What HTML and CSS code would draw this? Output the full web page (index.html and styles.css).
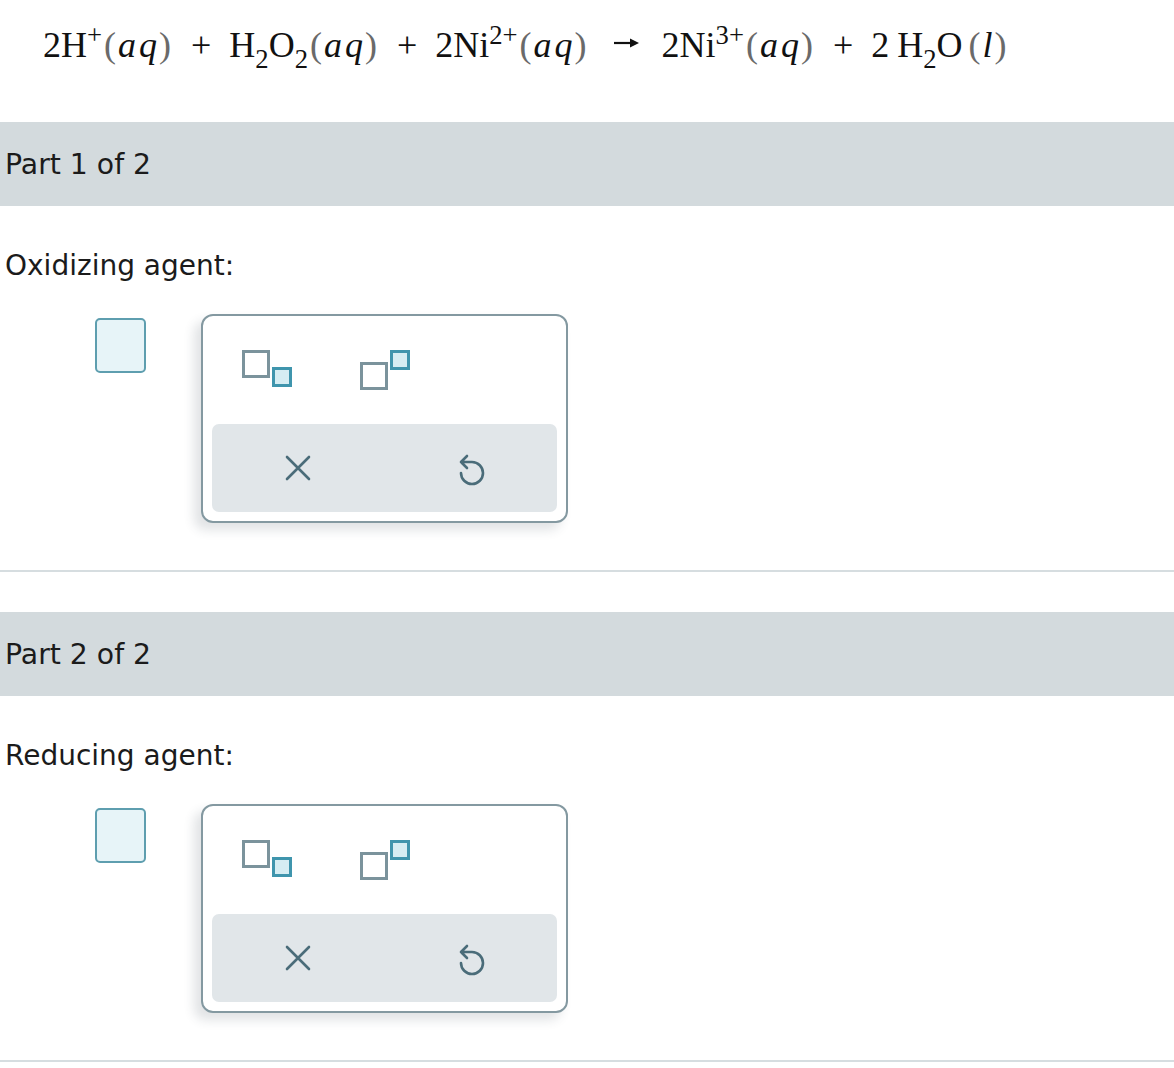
FILE: index.html
```html
<!DOCTYPE html>
<html lang="en">
<head>
<meta charset="utf-8">
<title>Redox agents</title>
<link rel="stylesheet" href="styles.css">
</head>
<body>
<div class="equation">
  <span>2H</span><sup>+</sup><span class="paren">(</span><i>a</i><i class="q">q</i><span class="paren">)</span>
  <span class="op">+</span>
  <span>H</span><sub>2</sub><span>O</span><sub>2</sub><span class="paren">(</span><i>a</i><i class="q">q</i><span class="paren">)</span>
  <span class="op">+</span>
  <span>2Ni</span><sup>2+</sup><span class="paren">(</span><i>a</i><i class="q">q</i><span class="paren">)</span>
  <svg class="arrow" width="26" height="12" viewBox="0 0 26 12"><path d="M0 6 H18" class="arrow-line"/><path d="M16 1.5 L25 6 L16 10.5 Z" class="arrow-head"/></svg>
  <span>2Ni</span><sup>3+</sup><span class="paren">(</span><i>a</i><i class="q">q</i><span class="paren">)</span>
  <span class="op">+</span>
  <span class="coef">2</span><span>H</span><sub>2</sub><span>O</span><span class="paren gapl">(</span><i>l</i><span class="paren">)</span>
</div>

<section class="part">
  <div class="part-header">Part 1 of 2</div>
  <p class="prompt">Oxidizing agent:</p>
  <div class="answer-row">
    <div class="answer-box"></div>
    <div class="palette">
      <div class="palette-icons">
        <svg class="tpl" width="50" height="40" viewBox="0 0 50 40"><rect x="1.5" y="1.5" width="25" height="25" class="big"/><rect x="31.5" y="18.5" width="17" height="17" class="small"/></svg>
        <svg class="tpl" width="50" height="40" viewBox="0 0 50 40"><rect x="1.5" y="13.5" width="25" height="25" class="big"/><rect x="31.5" y="1.5" width="17" height="17" class="small"/></svg>
      </div>
      <div class="palette-actions">
        <div class="action"><svg width="26" height="26" viewBox="0 0 26 26"><path d="M2 2 L24 24 M24 2 L2 24" class="stroke"/></svg></div>
        <div class="action"><svg width="40" height="45" viewBox="0 0 40 45"><path d="M16 10 L10 16 L16 22 M10 16 H21 A11 11 0 1 1 10 27" class="stroke"/></svg></div>
      </div>
    </div>
  </div>
  <hr class="divider">
</section>

<section class="part">
  <div class="part-header">Part 2 of 2</div>
  <p class="prompt">Reducing agent:</p>
  <div class="answer-row">
    <div class="answer-box"></div>
    <div class="palette">
      <div class="palette-icons">
        <svg class="tpl" width="50" height="40" viewBox="0 0 50 40"><rect x="1.5" y="1.5" width="25" height="25" class="big"/><rect x="31.5" y="18.5" width="17" height="17" class="small"/></svg>
        <svg class="tpl" width="50" height="40" viewBox="0 0 50 40"><rect x="1.5" y="13.5" width="25" height="25" class="big"/><rect x="31.5" y="1.5" width="17" height="17" class="small"/></svg>
      </div>
      <div class="palette-actions">
        <div class="action"><svg width="26" height="26" viewBox="0 0 26 26"><path d="M2 2 L24 24 M24 2 L2 24" class="stroke"/></svg></div>
        <div class="action"><svg width="40" height="45" viewBox="0 0 40 45"><path d="M16 10 L10 16 L16 22 M10 16 H21 A11 11 0 1 1 10 27" class="stroke"/></svg></div>
      </div>
    </div>
  </div>
  <hr class="divider">
</section>
</body>
</html>
```

FILE: styles.css
```css
html, body {
  margin: 0;
  padding: 0;
  background: #ffffff;
}

body {
  font-family: "DejaVu Sans", Verdana, sans-serif;
  color: #1b1b1b;
}

.equation {
  box-sizing: border-box;
  height: 122px;
  padding: 27px 0 0 43px;
  font-family: "Liberation Serif", "Times New Roman", serif;
  font-size: 36px;
  line-height: 36px;
  color: #111;
  white-space: nowrap;
}

.equation sup,
.equation sub {
  font-size: 0.74em;
  line-height: 0;
}

.equation sup {
  vertical-align: 0.5em;
}

.equation sub {
  vertical-align: -0.4em;
}

.equation i {
  font-style: italic;
}

.equation .q {
  margin-left: 3px;
}

.equation .paren {
  color: #6a6a6a;
  margin: 0 2px;
}

.equation .op {
  margin: 0 9px;
}

.equation .arrow {
  vertical-align: 0.22em;
  margin: 0 13px 0 16px;
}

.arrow-line {
  stroke: #111;
  stroke-width: 2.2;
}

.arrow-head {
  fill: #111;
}

.equation .coef {
  margin-right: 8px;
}

.equation .gapl {
  margin-left: 6px;
}

.part-header {
  box-sizing: border-box;
  height: 84px;
  padding: 28px 0 0 5px;
  background: #d3dadd;
  font-size: 28.3px;
  line-height: 30px;
}

.prompt {
  margin: 45px 0 0 0;
  padding-left: 5px;
  font-size: 28px;
  line-height: 30px;
}

.answer-row {
  display: flex;
  align-items: flex-start;
  padding-left: 95px;
  margin-top: 33px;
}

.answer-box {
  box-sizing: border-box;
  width: 51px;
  height: 55px;
  margin-top: 4px;
  border: 2px solid #5e9eaf;
  border-radius: 5px;
  background: #e7f4f8;
}

.palette {
  box-sizing: border-box;
  width: 367px;
  height: 209px;
  margin-left: 55px;
  border: 2px solid #8499a1;
  border-radius: 12px;
  background: #fff;
  box-shadow: -7px 7px 11px rgba(40, 60, 70, 0.14);
  padding: 0 9px 9px 9px;
  display: flex;
  flex-direction: column;
}

.palette-icons {
  box-sizing: border-box;
  height: 108px;
  flex: none;
  display: flex;
  align-items: flex-start;
  padding: 34px 0 0 30px;
  gap: 68px;
}

.tpl .big {
  fill: #fff;
  stroke: #7b939c;
  stroke-width: 3;
}

.tpl .small {
  fill: #d5edf3;
  stroke: #3f95ad;
  stroke-width: 3;
}

.palette-actions {
  height: 88px;
  flex: none;
  display: flex;
  background: #e1e6e9;
  border-radius: 7px;
}

.action {
  flex: 1;
  display: flex;
  align-items: center;
  justify-content: center;
}

.stroke {
  fill: none;
  stroke: #4a6c79;
  stroke-width: 2.6;
  stroke-linecap: round;
  stroke-linejoin: round;
}

.divider {
  margin: 47px 0 0 0;
  border: 0;
  height: 2px;
  background: #d6dde0;
}

.part + .part {
  margin-top: 40px;
}
```
